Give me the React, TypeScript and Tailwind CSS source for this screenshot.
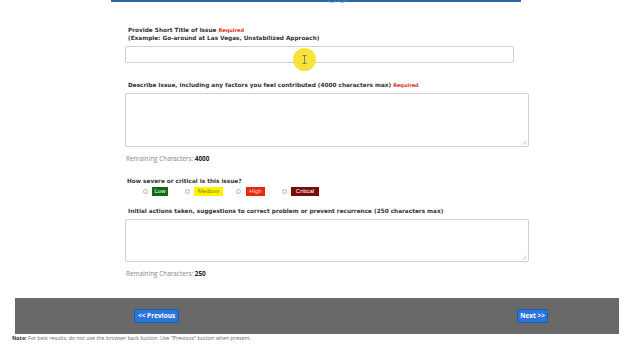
export default function App() {
  const label = "font-['DejaVu_Sans',Verdana,sans-serif] text-[5.75px] font-bold leading-[8px] text-[#333]";
  const remaining = "font-['Open_Sans',sans-serif] text-[6.4px] leading-[8px] text-[#888]";

  return (
    <div className="relative h-[360px] w-[640px] overflow-hidden bg-white">
      {/* top blue strip of the step header */}
      <div className="ml-[111px] h-[2px] w-[410px] bg-[#2f63a6]" />

      <div className="pl-[125px]">
        {/* Short title */}
        <div className={`mt-[24px] pl-[3px] ${label}`}>
          Provide Short Title of Issue{" "}
          <span className="text-[5px] text-[#d9301c]">Required</span>
        </div>
        <div className={`pl-[3px] ${label}`}>
          (Example: Go-around at Las Vegas, Unstabilized Approach)
        </div>
        <div className="mt-[4px] h-[17px] w-[389px] rounded-[2px] border border-[#d0d0d0] bg-white" />

        {/* Describe issue */}
        <div className={`mt-[18px] pl-[3px] ${label}`}>
          Describe Issue, including any factors you feel contributed (4000 characters max){" "}
          <span className="text-[5px] text-[#d9301c]">Required</span>
        </div>
        <Area h="h-[54px]" />
        <div className={`mt-[8px] pl-[1px] ${remaining}`}>
          Remaining Characters: <span className="font-bold text-[#222]">4000</span>
        </div>

        {/* Severity */}
        <div className={`mt-[14px] pl-[2px] ${label}`}>How severe or critical is this issue?</div>
        <div className="mt-[2px] flex h-[9px] items-center pl-[18px] font-['Liberation_Sans',Arial,sans-serif] text-[6px] leading-[9px]">
          <Radio />
          <span className="ml-[4px] flex h-[9px] w-[16px] items-center justify-center bg-[#0d6b12] text-white">Low</span>
          <span className="ml-[17px]"><Radio /></span>
          <span className="ml-[4px] flex h-[9px] w-[29px] items-center justify-center bg-[#fff200] text-[#8a7d00]">Medium</span>
          <span className="ml-[13px]"><Radio /></span>
          <span className="ml-[5px] flex h-[9px] w-[19px] items-center justify-center bg-[#e82a0c] text-[#ffd9cc]">High</span>
          <span className="ml-[17px]"><Radio /></span>
          <span className="ml-[4px] flex h-[9px] w-[28px] items-center justify-center bg-[#7a0a0a] text-white">Critical</span>
        </div>

        {/* Initial actions */}
        <div className={`mt-[11px] pl-[3px] ${label}`}>
          Initial actions taken, suggestions to correct problem or prevent recurrence (250 characters max)
        </div>
        <Area h="h-[43px]" />
        <div className={`mt-[8px] pl-[1px] ${remaining}`}>
          Remaining Characters: <span className="font-bold text-[#222]">250</span>
        </div>
      </div>

      {/* footer nav */}
      <div className="ml-[15px] mt-[20px] flex h-[36px] w-[604px] items-center bg-[#696969]">
        <button className="ml-[119px] h-[14px] rounded-[2px] border border-[#1a5db5] bg-[#2a74da] px-[3px] font-['Open_Sans',sans-serif] text-[6.5px] font-bold leading-[12px] text-white">
          &lt;&lt; Previous
        </button>
        <button className="ml-auto mr-[71px] h-[14px] rounded-[2px] border border-[#1a5db5] bg-[#2a74da] px-[2px] font-['Open_Sans',sans-serif] text-[6.5px] font-bold leading-[12px] text-white">
          Next &gt;&gt;
        </button>
      </div>
      <div className="pl-[12px] font-['Open_Sans',sans-serif] text-[5.3px] leading-[8px] text-[#666]">
        <span className="font-bold text-[#333]">Note:</span> For best results, do not use the browser back button. Use "Previous" button when present.
      </div>

      {/* cropped header icon */}
      <svg className="absolute left-[326px] top-[-8px]" width="22" height="12" viewBox="0 0 22 12">
        <circle cx="6" cy="5" r="5" fill="none" stroke="#3b78c4" strokeWidth="1.2" />
        <circle cx="16" cy="5" r="5" fill="none" stroke="#3b78c4" strokeWidth="1.2" />
      </svg>

      {/* cursor highlight */}
      <div className="absolute left-[293px] top-[48px] flex h-[23px] w-[23px] items-center justify-center rounded-full bg-[#f7e025]/90">
        <svg width="5" height="9" viewBox="0 0 5 9">
          <path d="M0.5 0.5h4M2.5 0.5v8M0.5 8.5h4" stroke="#6b6b5a" strokeWidth="0.8" fill="none" />
        </svg>
      </div>
    </div>
  );
}

function Area({ h }: { h: string }) {
  return (
    <div className={`relative mt-[4px] ${h} w-[404px] rounded-[2px] border border-[#d0d0d0] bg-white`}>
      <svg className="absolute bottom-[1px] right-[1px]" width="5" height="5" viewBox="0 0 5 5">
        <path d="M4.5 0.5L0.5 4.5M4.5 2.5L2.5 4.5" stroke="#aaa" strokeWidth="0.6" />
      </svg>
    </div>
  );
}

function Radio() {
  return <span className="block h-[5px] w-[5px] rounded-full border border-[#b5b5b5] bg-white" />;
}
